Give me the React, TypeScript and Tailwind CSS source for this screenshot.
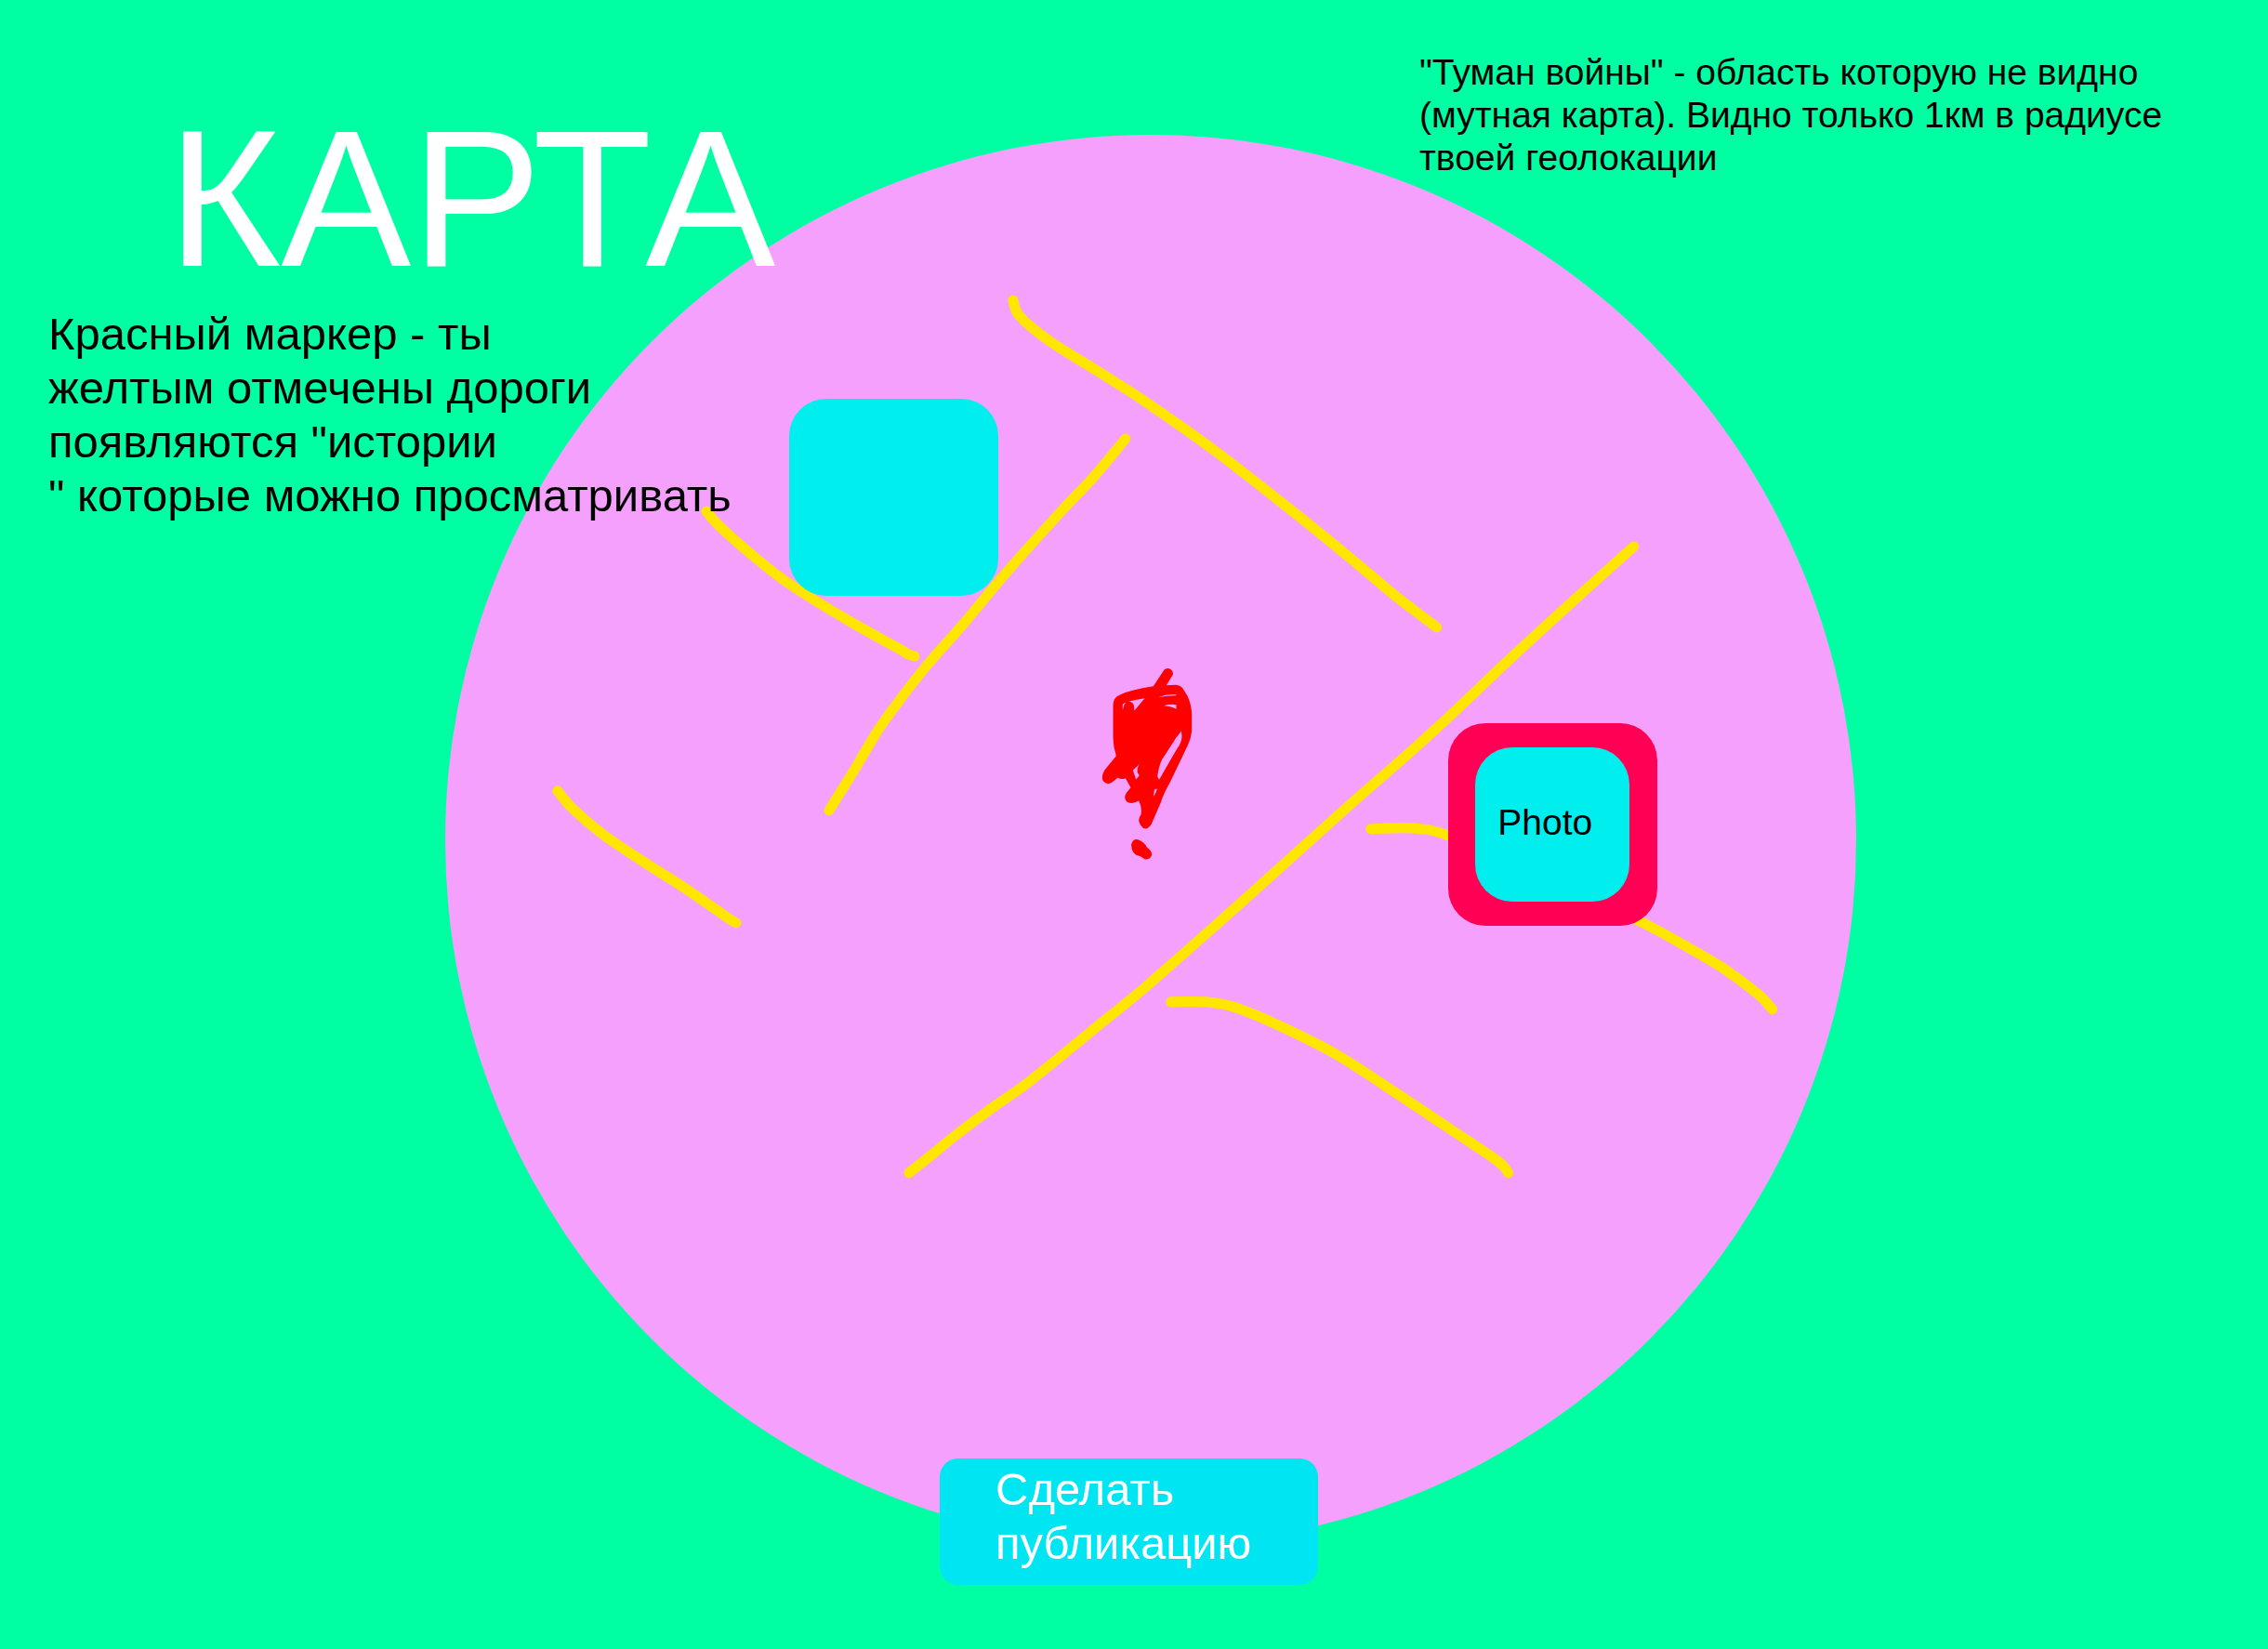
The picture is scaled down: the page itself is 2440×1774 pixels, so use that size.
type Point = [number, number];

const roads: Point[][] = [
  [[1091, 323], [1098, 340], [1129, 366], [1183, 400], [1236, 434], [1308, 485], [1379, 540], [1451, 598], [1501, 640], [1547, 675]],
  [[1212, 472], [1177, 514], [1143, 550], [1083, 617], [1037, 672], [995, 720], [953, 775], [937, 800], [918, 832], [893, 872]],
  [[761, 550], [774, 565], [810, 597], [840, 621], [873, 643], [923, 673], [970, 699], [978, 704], [985, 706]],
  [[601, 851], [617, 870], [650, 898], [693, 927], [740, 957], [783, 987], [793, 993]],
  [[1759, 588], [1700, 641], [1630, 705], [1543, 787], [1440, 878], [1340, 968], [1237, 1059], [1187, 1100], [1107, 1165], [1070, 1191], [1030, 1221], [1008, 1239], [979, 1262]],
  [[1476, 892], [1507, 891], [1530, 892], [1559, 899], [1660, 940], [1767, 992], [1813, 1017], [1857, 1043], [1893, 1070], [1908, 1086]],
  [[1261, 1078], [1298, 1078], [1330, 1084], [1376, 1103], [1436, 1133], [1491, 1168], [1560, 1214], [1612, 1249], [1624, 1262]],
];

/** Smooth curve through every point of a road. */
function roadPath(points: Point[]): string {
  let d = `M${points[0][0]} ${points[0][1]}`;
  for (let i = 0; i < points.length - 1; i++) {
    const p0 = points[Math.max(i - 1, 0)];
    const p1 = points[i];
    const p2 = points[i + 1];
    const p3 = points[Math.min(i + 2, points.length - 1)];
    d += ` C${p1[0] + (p2[0] - p0[0]) / 6} ${p1[1] + (p2[1] - p0[1]) / 6} ${p2[0] - (p3[0] - p1[0]) / 6} ${p2[1] - (p3[1] - p1[1]) / 6} ${p2[0]} ${p2[1]}`;
  }
  return d;
}

function Roads() {
  return (
    <svg viewBox="480 145 1518 1518" className="h-full w-full" aria-hidden="true">
      <g fill="none" stroke="#ffe600" strokeWidth="11" strokeLinecap="round" strokeLinejoin="round">
        {roads.map((points, i) => (
          <path key={i} d={roadPath(points)} />
        ))}
      </g>
      <g transform="translate(1150 690) scale(0.3333)" fill="#ff0000" fillRule="evenodd">
        <path d="M276 145L311 92A17 17 0 0 1 339 108L318 142L350 141Q368 143 376 160Q398 190 400 235V290Q398 315 385 340L330 455Q310 490 300 520L270 590Q252 618 236 595Q222 577 236 560Q240 535 229 515Q205 528 190 518Q178 505 190 488L203 472L186 442Q172 448 162 440L142 456Q125 467 113 450Q107 435 119 415L156 370Q146 340 146 310V205Q146 180 170 172Q200 157 276 145ZM177 222V203Q190 192 248 184L214 225V212Q212 196 198 195Q182 197 180 212ZM290 181Q320 170 350 172V175Q320 175 290 181ZM310 208Q330 202 350 205V219Q335 210 310 208ZM366 289Q360 300 350 310Q325 350 305 380Q294 400 289 437L295 447Q330 385 354 345Q369 325 368 305ZM279 480L287 475Q288 485 276 502ZM210 416L234 394Q222 405 225 425L231 433L220 446Z" />
        <path d="M205 655Q210 637 226 640Q245 645 255 665Q272 678 271 690Q265 707 248 703Q235 692 220 690Q206 680 205 660Z" />
      </g>
    </svg>
  );
}

export default function App() {
  return (
    <main className="grid min-h-screen grid-cols-1 grid-rows-1 overflow-hidden bg-[#00ffa3] font-['Liberation_Sans',Arial,sans-serif] text-black">
      <section
        aria-label="Карта"
        className="relative col-start-1 row-start-1 mt-[145px] ml-[479px] aspect-square w-[62.2%] self-start rounded-full bg-[#f5a0fc]"
      >
        <Roads />
        <button
          type="button"
          aria-label="История"
          className="absolute top-[18.7%] left-[24.4%] h-[14%] w-[14.8%] rounded-[40px] bg-[#00eeee]"
        />
        <button
          type="button"
          className="absolute top-[41.7%] left-[71.1%] flex h-[14.4%] w-[14.8%] items-center justify-center rounded-[40px] bg-[#ff0055]"
        >
          <span className="flex h-[76%] w-[74%] items-center rounded-[40px] bg-[#00eeee] pb-1 pl-6 text-[39px] leading-[46px]">
            Photo
          </span>
        </button>
      </section>

      <header className="relative col-start-1 row-start-1 flex items-start justify-between self-start pr-[60px] pl-[52px]">
        <div className="pt-[98px]">
          <h1 className="pl-32 text-[210px] leading-[232px] text-white">КАРТА</h1>
          <p className="text-[49px] leading-[58px] whitespace-nowrap">
            Красный маркер - ты
            <br />
            желтым отмечены дороги
            <br />
            появляются "истории
            <br />" которые можно просматривать
          </p>
        </div>
        <p className="w-[853px] pt-[55px] text-[39px] leading-[46px]">
          "Туман войны" - область которую не видно (мутная карта). Видно только 1км в радиусе твоей геолокации
        </p>
      </header>

      <button
        type="button"
        className="relative col-start-1 row-start-1 mb-[69px] ml-[1011px] w-[407px] self-end justify-self-start rounded-[20px] bg-[#00e5f2] pt-1 pr-8 pb-4 pl-[60px] text-left text-[49px] leading-[58px] text-white"
      >
        Сделать публикацию
      </button>
    </main>
  );
}
